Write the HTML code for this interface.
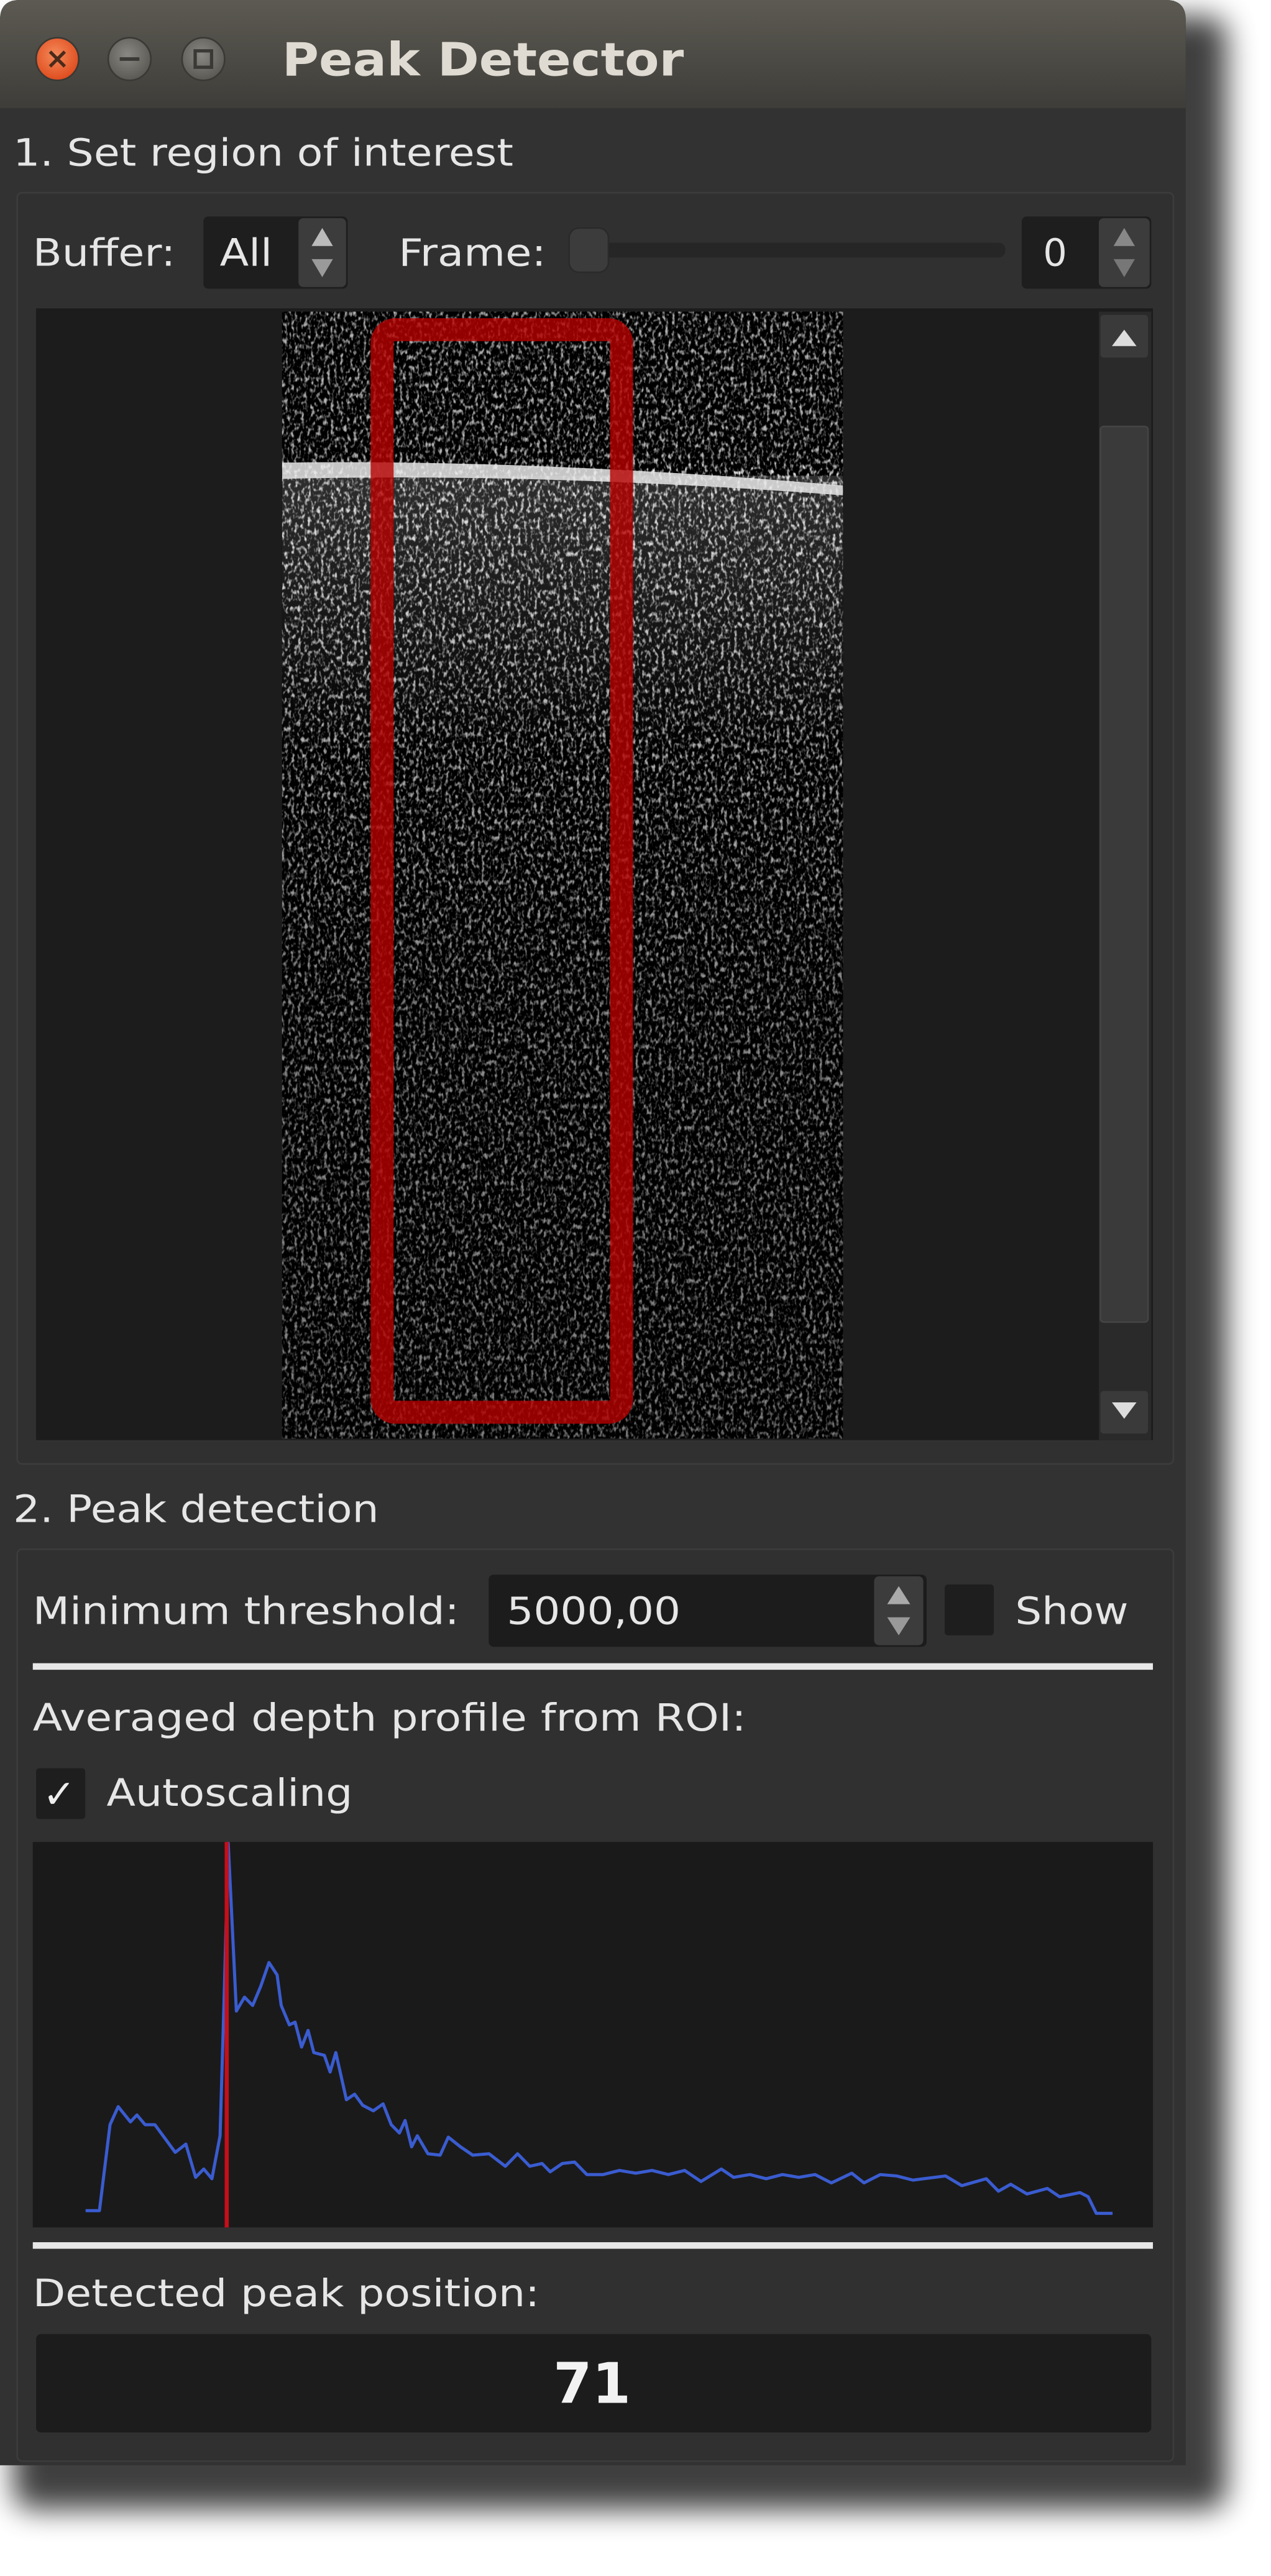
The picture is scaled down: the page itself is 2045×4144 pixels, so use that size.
<!DOCTYPE html>
<html><head><meta charset="utf-8"><style>
html,body{margin:0;padding:0;background:#fff;overflow:hidden}
svg{display:block}
text{font-family:"DejaVu Sans","Liberation Sans",sans-serif}
</style></head><body>
<svg width="2045" height="4144" viewBox="0 0 775 1570.5" preserveAspectRatio="none" xmlns="http://www.w3.org/2000/svg">
<defs>
<filter id="sh" x="-10%" y="-10%" width="130%" height="130%"><feGaussianBlur stdDeviation="9"/></filter>
<linearGradient id="tb" x1="0" y1="0" x2="0" y2="1"><stop offset="0" stop-color="#5c5a52"/><stop offset="1" stop-color="#3e3d39"/></linearGradient>
<radialGradient id="cl" cx="0.45" cy="0.4" r="0.6"><stop offset="0" stop-color="#f58a5a"/><stop offset="1" stop-color="#df4c1e"/></radialGradient>
<radialGradient id="gb" cx="0.45" cy="0.4" r="0.6"><stop offset="0" stop-color="#8a8882"/><stop offset="1" stop-color="#5a5954"/></radialGradient>
<filter id="noise" x="0" y="0" width="100%" height="100%" color-interpolation-filters="sRGB">
<feTurbulence type="fractalNoise" baseFrequency="0.5 0.3" numOctaves="2" seed="4"/>
<feColorMatrix type="matrix" values="3.5 0 0 0 -1.7  3.5 0 0 0 -1.7  3.5 0 0 0 -1.7  0 0 0 0 1"/>
</filter>
<linearGradient id="depth" x1="0" y1="0" x2="0" y2="1">
<stop offset="0" stop-color="#000" stop-opacity="0.3"/>
<stop offset="0.13" stop-color="#000" stop-opacity="0.3"/>
<stop offset="0.15" stop-color="#000" stop-opacity="0"/>
<stop offset="0.35" stop-color="#000" stop-opacity="0.3"/>
<stop offset="0.6" stop-color="#000" stop-opacity="0.45"/>
<stop offset="1" stop-color="#000" stop-opacity="0.5"/>
</linearGradient>
<linearGradient id="glow" x1="0" y1="0" x2="0" y2="1">
<stop offset="0" stop-color="#999" stop-opacity="0.3"/>
<stop offset="1" stop-color="#999" stop-opacity="0"/>
</linearGradient>
<clipPath id="imgclip"><rect x="172" y="190" width="342" height="687"/></clipPath>
</defs>

<rect x="8" y="10" width="740" height="1520" rx="12" fill="#000" opacity="0.75" filter="url(#sh)"/>
<path d="M0 12 Q0 0 12 0 L711 0 Q723 0 723 12 L723 1503 L0 1503 Z" fill="#323232"/>
<path d="M0 12 Q0 0 12 0 L711 0 Q723 0 723 12 L723 66 L0 66 Z" fill="url(#tb)"/>
<circle cx="35" cy="36" r="13" fill="url(#cl)" stroke="#3a3935" stroke-width="1"/>
<path d="M30.5 31.5 L39.5 40.5 M39.5 31.5 L30.5 40.5" stroke="#4a2a1a" stroke-width="2"/>
<circle cx="79" cy="36" r="13" fill="url(#gb)" stroke="#3a3935" stroke-width="1"/>
<path d="M73 36 L85 36" stroke="#3a3935" stroke-width="2.2"/>
<circle cx="124" cy="36" r="13" fill="url(#gb)" stroke="#3a3935" stroke-width="1"/>
<rect x="119" y="31" width="10" height="10" fill="none" stroke="#3a3935" stroke-width="2"/>
<text x="172" y="46" font-size="28" font-weight="bold" fill="#dfdbd2" textLength="245" lengthAdjust="spacingAndGlyphs">Peak Detector</text>

<text x="8" y="101" font-size="23" fill="#e6e6e6" textLength="305" lengthAdjust="spacingAndGlyphs">1. Set region of interest</text>
<rect x="10.5" y="117.5" width="705" height="775" rx="3" fill="#303030" stroke="#3c3c3c"/>

<text x="20" y="162" font-size="23" fill="#e6e6e6" textLength="87" lengthAdjust="spacingAndGlyphs">Buffer:</text>
<rect x="124" y="132" width="88" height="44" rx="3" fill="#1e1e1e"/>
<rect x="182" y="133" width="29" height="42" rx="3" fill="#3c3c3c"/>
<path d="M190 150 L196.5 139 L203 150 Z" fill="#bbb"/><path d="M190 158 L196.5 169 L203 158 Z" fill="#9a9a9a"/>
<text x="134" y="162" font-size="23" fill="#e6e6e6" textLength="32" lengthAdjust="spacingAndGlyphs">All</text>
<text x="243" y="162" font-size="23" fill="#e6e6e6" textLength="90" lengthAdjust="spacingAndGlyphs">Frame:</text>
<rect x="350" y="148" width="263" height="9" rx="4" fill="#262626"/>
<rect x="347" y="139" width="24" height="27" rx="6" fill="#3c3c3c" stroke="#2a2a2a"/>
<rect x="623" y="132" width="79" height="44" rx="3" fill="#1e1e1e"/>
<rect x="670" y="133" width="31" height="42" rx="3" fill="#3c3c3c"/>
<path d="M679 150 L685.5 139 L692 150 Z" fill="#888"/><path d="M679 158 L685.5 169 L692 158 Z" fill="#777"/>
<text x="636" y="162" font-size="23" fill="#e6e6e6">0</text>

<rect x="22" y="188" width="681" height="690" fill="#1c1c1c"/>
<g clip-path="url(#imgclip)">
<rect x="172" y="190" width="342" height="687" fill="#000"/>
<rect x="172" y="190" width="342" height="687" filter="url(#noise)"/>
<rect x="172" y="190" width="342" height="687" fill="url(#depth)"/>
<rect x="172" y="290" width="342" height="170" fill="url(#glow)"/>
<path d="M172 282 Q330 280 514 296 L514 302 Q330 288 172 292 Z" fill="#e8e8e8" opacity="0.85"/>
</g>
<rect x="233" y="201" width="146" height="660" rx="8" fill="none" stroke="#b80000" stroke-opacity="0.8" stroke-width="14"/>
<rect x="670" y="190" width="32" height="688" fill="#2a2a2a"/>
<rect x="671" y="192" width="29" height="26" rx="2" fill="#3a3a3a"/>
<path d="M678 211 L685.5 201 L693 211 Z" fill="#ddd"/>
<rect x="671" y="260" width="29" height="546" rx="2" fill="#3a3a3a" stroke="#444"/>
<rect x="671" y="848" width="29" height="26" rx="2" fill="#3a3a3a"/>
<path d="M678 855 L685.5 865 L693 855 Z" fill="#ddd"/>

<text x="8" y="928" font-size="23" fill="#e6e6e6" textLength="223" lengthAdjust="spacingAndGlyphs">2. Peak detection</text>
<rect x="10.5" y="944.5" width="705" height="556" rx="3" fill="#303030" stroke="#3c3c3c"/>

<text x="20" y="990" font-size="23" fill="#e6e6e6" textLength="260" lengthAdjust="spacingAndGlyphs">Minimum threshold:</text>
<rect x="298" y="960" width="267" height="44" rx="3" fill="#1c1c1c"/>
<rect x="533" y="961" width="30" height="42" rx="3" fill="#3c3c3c"/>
<path d="M541 978 L548 967 L555 978 Z" fill="#aaa"/><path d="M541 986 L548 997 L555 986 Z" fill="#999"/>
<text x="309" y="990" font-size="23" fill="#e6e6e6" textLength="106" lengthAdjust="spacingAndGlyphs">5000,00</text>
<rect x="576" y="966" width="30" height="31" rx="2" fill="#1e1e1e"/>
<text x="619" y="990" font-size="23" fill="#e6e6e6" textLength="69" lengthAdjust="spacingAndGlyphs">Show</text>
<rect x="20" y="1014" width="683" height="4" fill="#e8e8e8"/>

<text x="20" y="1055" font-size="23" fill="#e6e6e6" textLength="435" lengthAdjust="spacingAndGlyphs">Averaged depth profile from ROI:</text>
<rect x="22" y="1078" width="30" height="31" rx="2" fill="#1e1e1e"/>
<text x="26" y="1102" font-size="24" fill="#eee">✓</text>
<text x="65" y="1101" font-size="23" fill="#e6e6e6" textLength="150" lengthAdjust="spacingAndGlyphs">Autoscaling</text>

<rect x="20" y="1123" width="683" height="235" fill="#1a1a1a"/>
<g transform="translate(0,1116.2) scale(0.497,0.169)">
<polyline fill="none" stroke="#3a5cd0" stroke-width="5" vector-effect="non-scaling-stroke" stroke-linejoin="round" points="105,1370 122,1370 135,1060 145,995 160,1050 168,1025 178,1060 190,1060 200,1100 215,1160 228,1130 240,1250 250,1220 260,1255 270,1100 275,600 280,45 290,650 300,600 310,630 320,560 330,475 340,520 345,630 355,700 362,690 370,780 378,720 385,800 398,810 405,870 412,800 425,970 435,950 445,990 458,1010 470,985 480,1060 490,1090 497,1045 505,1140 512,1100 525,1165 540,1170 550,1105 565,1140 580,1170 600,1165 620,1210 635,1165 650,1210 665,1200 675,1230 690,1200 705,1195 720,1240 740,1240 760,1225 780,1235 800,1225 820,1240 840,1225 860,1265 885,1220 900,1250 920,1240 940,1255 960,1240 980,1250 1000,1240 1020,1270 1045,1235 1060,1270 1080,1240 1100,1245 1120,1260 1160,1245 1180,1280 1210,1255 1225,1300 1240,1275 1260,1310 1285,1290 1300,1320 1325,1305 1335,1320 1345,1380 1365,1380"/>
</g>
<rect x="137" y="1123" width="2.5" height="235" fill="#c40f1a"/>
<rect x="20" y="1367" width="683" height="4" fill="#e8e8e8"/>

<text x="20" y="1406" font-size="23" fill="#e6e6e6" textLength="309" lengthAdjust="spacingAndGlyphs">Detected peak position:</text>
<rect x="22" y="1423" width="680" height="60" rx="3" fill="#1c1c1c"/>
<text x="361" y="1465" font-size="34" font-weight="bold" fill="#f2f2f2" text-anchor="middle">71</text>
</svg>
</body></html>
